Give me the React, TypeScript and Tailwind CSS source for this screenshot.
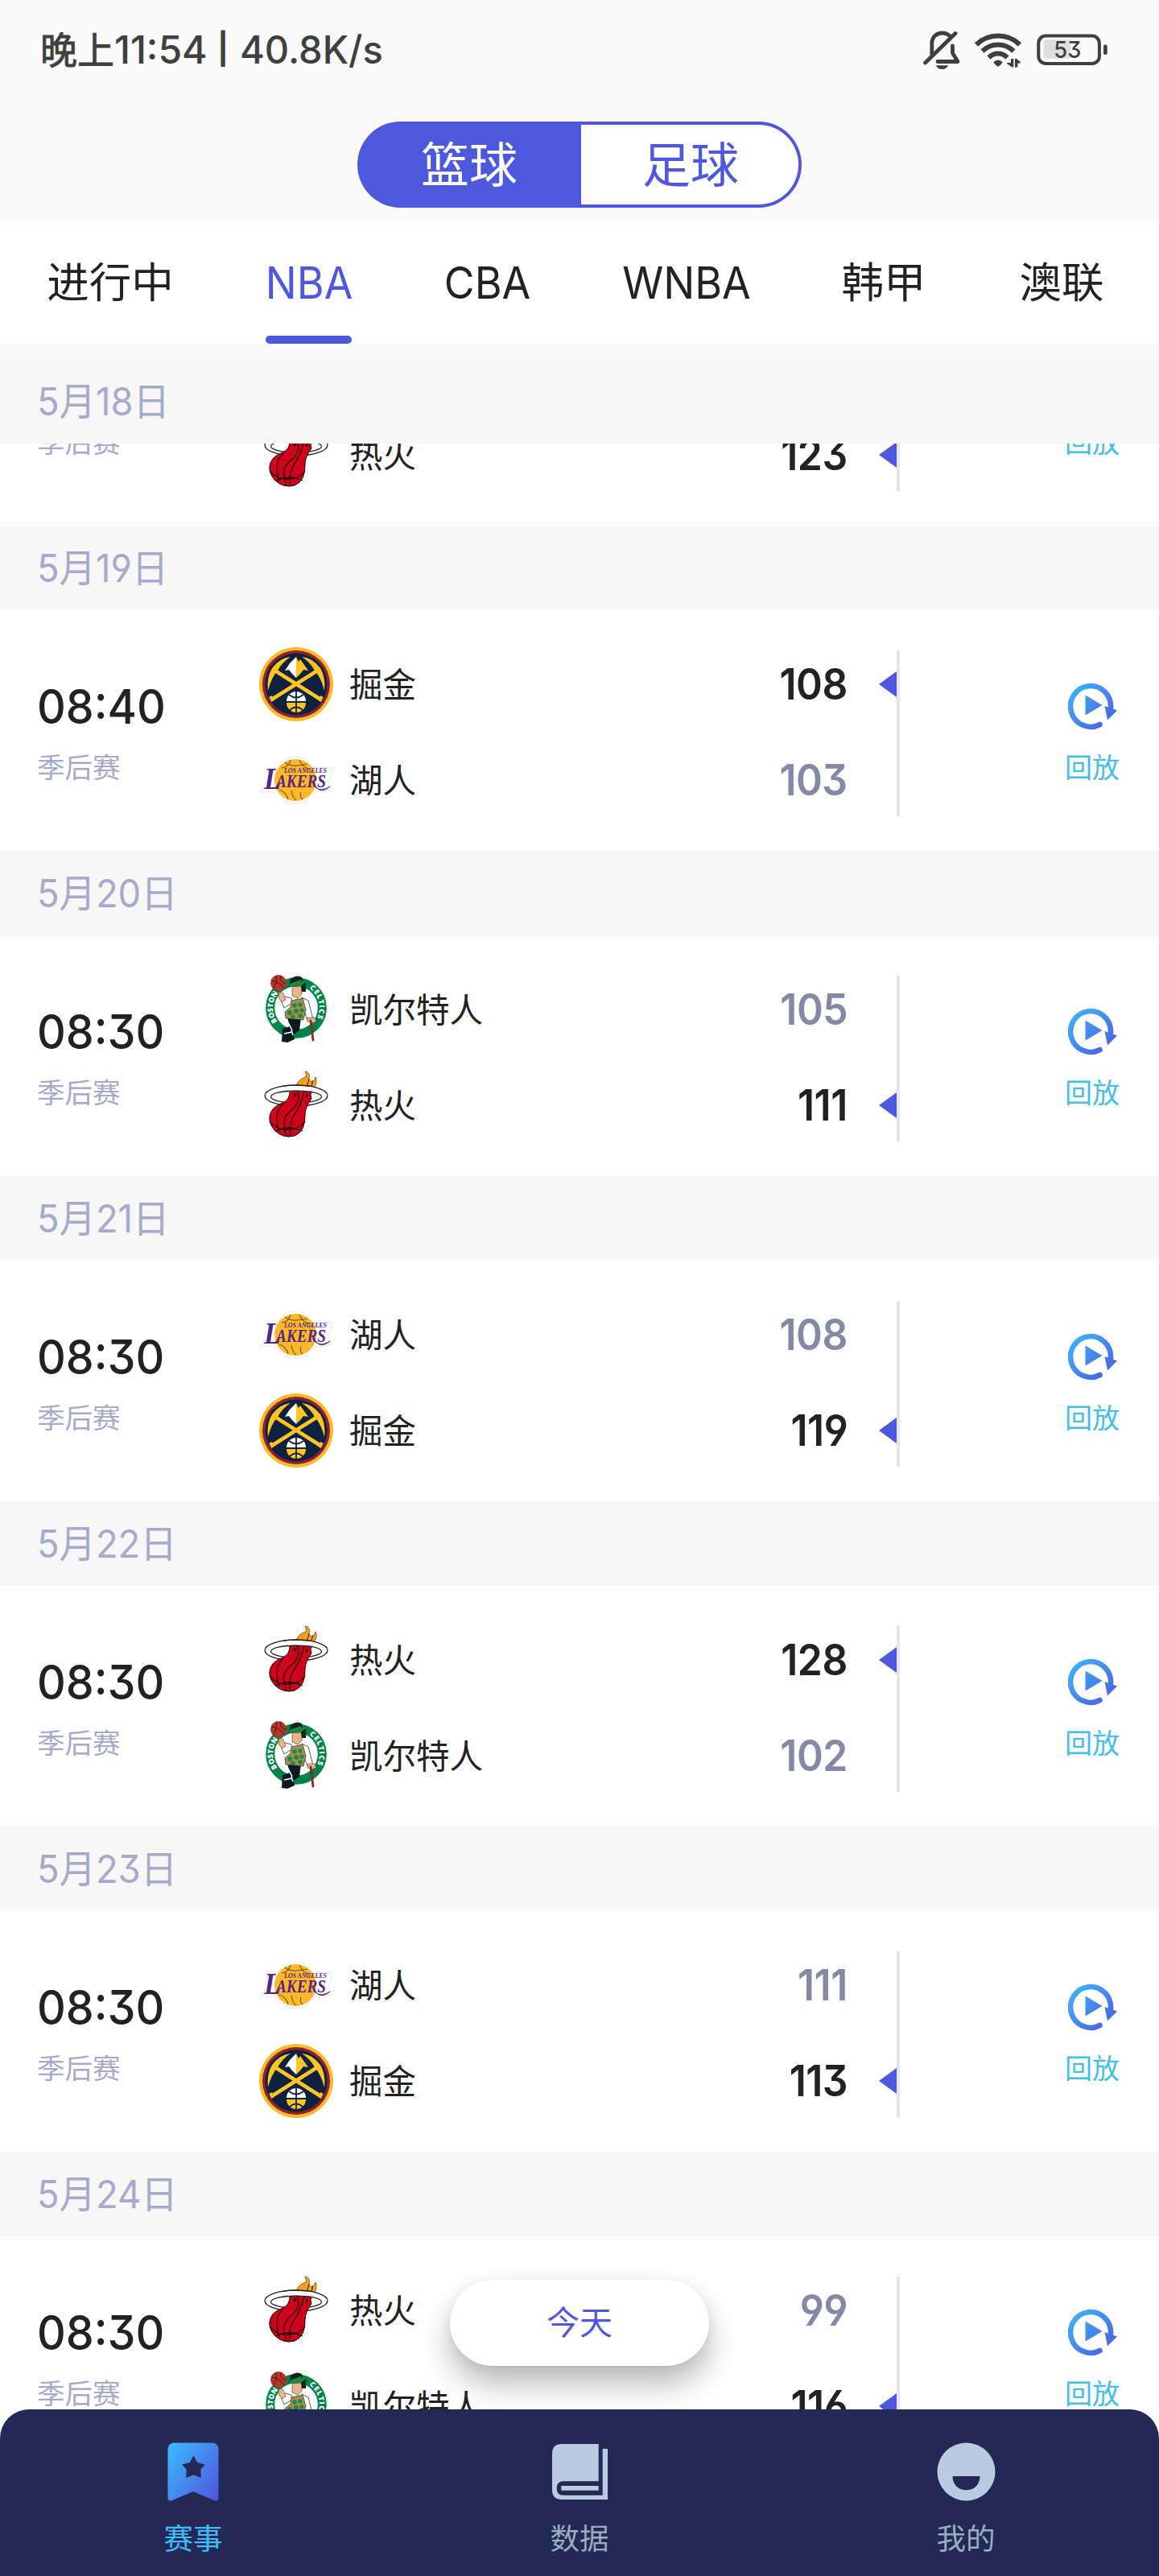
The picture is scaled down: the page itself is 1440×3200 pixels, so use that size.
import React from "react";

type Team = "nuggets" | "lakers" | "celtics" | "heat";
const NAMES: Record<Team, string> = { nuggets: "掘金", lakers: "湖人", celtics: "凯尔特人", heat: "热火" };

type Game = { time: string; a: Team; sa: number; b: Team; sb: number };
const LIST: { date: string; game: Game }[] = [
  { date: "5月19日", game: { time: "08:40", a: "nuggets", sa: 108, b: "lakers", sb: 103 } },
  { date: "5月20日", game: { time: "08:30", a: "celtics", sa: 105, b: "heat", sb: 111 } },
  { date: "5月21日", game: { time: "08:30", a: "lakers", sa: 108, b: "nuggets", sb: 119 } },
  { date: "5月22日", game: { time: "08:30", a: "heat", sa: 128, b: "celtics", sb: 102 } },
  { date: "5月23日", game: { time: "08:30", a: "lakers", sa: 111, b: "nuggets", sb: 113 } },
  { date: "5月24日", game: { time: "08:30", a: "heat", sa: 99, b: "celtics", sb: 116 } },
];

function Nuggets() {
  return (
    <svg width="92" height="92" viewBox="0 0 92 92">
      <circle cx="46" cy="46" r="46" fill="#fdb927" />
      <circle cx="46" cy="46" r="42" fill="#8b2131" />
      <circle cx="46" cy="46" r="38.5" fill="#0e2240" />
      <g stroke="#fec524" strokeWidth="4.6" strokeLinecap="butt">
        <path d="M17 64 L74 28" />
        <path d="M75 64 L18 28" />
      </g>
      <path d="M14 61l3 6M78 61l-3 6" stroke="#fec524" strokeWidth="4" />
      <path d="M39 12 Q26 13 16 26 Q9 38 11 54 Q15 38 23 29 Q29 18 39 12Z" fill="#fec524" />
      <path d="M53 12 Q66 13 76 26 Q83 38 81 54 Q77 38 69 29 Q63 18 53 12Z" fill="#fec524" />
      <path d="M46 12 L38 20 L32 29 L37 28 L40 32 L46 38Z" fill="#fff" />
      <path d="M46 12 L49 18 L51 15 L61 29 L55 28 L52 32 L46 38Z" fill="#fec524" />
      <path d="M34 67 A12 12 0 0 1 58 67Z" fill="#fff" />
      <path d="M34 69 A12 12 0 0 0 58 69Z" fill="#fec524" />
      <path d="M46 54v28M37 59Q46 66 55 59M37 79Q46 70 55 79" stroke="#0e2240" strokeWidth="1.8" fill="none" />
    </svg>
  );
}

function Lakers() {
  return (
    <svg width="92" height="92" viewBox="0 0 92 92">
      <path d="M4 57 L22 31 L30 22 Q46 12 60 22 L66 30 L91 31 L86 50 L90 56 L82 61 L69 60 Q60 75 45 75 Q28 74 23 61 L1 61Z" fill="#fff" stroke="#e9e9ec" strokeWidth="1" />
      <circle cx="45" cy="46" r="26" fill="#fdb927" />
      <path d="M32 24Q40 31 60 26M39 21Q36 31 28 31M50 21Q54 31 64 33M25 58Q34 61 36 70M40 59Q42 69 46 71M52 61Q50 67 54 70" stroke="#7d5a1c" strokeWidth="1.2" fill="none" />
      <text x="31" y="37" fontFamily="Liberation Serif, serif" fontSize="7.5" fontWeight="700" fontStyle="italic" fill="#552583" textLength="53" lengthAdjust="spacingAndGlyphs">LOS ANGELES</text>
      <text x="6" y="57" fontFamily="Liberation Serif, serif" fontSize="37" fontWeight="700" fontStyle="italic" fill="#552583" textLength="21" lengthAdjust="spacingAndGlyphs">L</text>
      <text x="21" y="54.5" fontFamily="Liberation Serif, serif" fontSize="23" fontWeight="700" fontStyle="italic" fill="#552583" textLength="62" lengthAdjust="spacingAndGlyphs">AKERS</text>
      <path d="M70 55 Q77 61 88 54 Q78 63 70 55Z" fill="#552583" stroke="#552583" strokeWidth=".8" />
    </svg>
  );
}

function Celtics() {
  return (
    <svg width="92" height="92" viewBox="0 0 92 92">
      <circle cx="46" cy="44" r="39" fill="#fff" stroke="#ececec" strokeWidth="1" />
      <circle cx="46" cy="44" r="32.3" fill="#fff" stroke="#008348" strokeWidth="11" />
      <path id="ringLeft" d="M22.5 61 A29 29 0 0 1 24.5 24.6" fill="none" />
      <path id="ringRight" d="M62.2 20 A29 29 0 0 1 71.6 57.6" fill="none" />
      <text fill="#fff" fontFamily="Open Sans, sans-serif" fontWeight="800" fontSize="9">
        <textPath href="#ringLeft" textLength="38">BOSTON</textPath>
      </text>
      <text fill="#fff" fontFamily="Open Sans, sans-serif" fontWeight="800" fontSize="9">
        <textPath href="#ringRight" textLength="41">CELTICS</textPath>
      </text>
      <path d="M35 56 L52 56 L50 72 L43 77 L44 83 L35 87 L28 86 L29 70 L38 67Z" fill="#0b1a22" />
      <path d="M36 62l5 10M31 76l10-2M40 72l2 6" stroke="#fff" strokeWidth="1.6" />
      <path d="M26 32 L31 44 L41 38 L40 32 L32 30Z M53 31 L61 35 L67 58 L60 59 L56 48Z" fill="#fff" stroke="#333" strokeWidth=".8" />
      <path d="M40 35 L54 32 L58 46 L55 59 L33 57 L32 49 L39 43Z" fill="#a48d52" stroke="#26351f" strokeWidth=".7" />
      <g fill="#1b8a3f"><circle cx="44" cy="41" r="2.8" /><circle cx="51" cy="40" r="2.6" /><circle cx="38" cy="50" r="3" /><circle cx="46" cy="48" r="3" /><circle cx="53" cy="47" r="2.6" /><circle cx="42" cy="55" r="2.6" /><circle cx="51" cy="54" r="2.8" /></g>
      <path d="M41 17 L53 17 L53 27 L48 32 L41 29Z" fill="#e8b48a" stroke="#4d3a2a" strokeWidth=".6" />
      <path d="M39 8 Q46 2 53 6 L54 12 L58 13 L58 24 L53 24 L52 17 L37 18Z" fill="#14231c" />
      <path d="M38 14 L52 9 L53 12 L61 9 L52 17 L38 18Z" fill="#1b8a3f" />
      <path d="M25 24 L30 26 L33 34 L28 37 L24 31Z M60 56 L69 56 L71 61 L66 63 L60 61Z" fill="#e8b48a" stroke="#5a4030" strokeWidth=".6" />
      <path d="M64 60 L67 84" stroke="#8c2b25" strokeWidth="2.8" strokeLinecap="round" />
      <circle cx="24" cy="13" r="10" fill="#b5352c" />
      <path d="M15 10Q25 11 31 20M21 4Q23 13 17 20M27 4Q25 11 33 14" stroke="#4a1512" strokeWidth="1" fill="none" />
    </svg>
  );
}

function Heat() {
  return (
    <svg width="92" height="92" viewBox="0 0 92 92">
      <path d="M46 24 Q47 14 58 11 Q59 7 57 4 Q64 5 62 13 Q63 18 66 17 Q70 14 70 11 Q73 17 68 25 L55 32Z" fill="#f9a01b" stroke="#6b4a1a" strokeWidth=".8" />
      <path d="M57 25 Q61 20 62 13M63 25 Q67 20 66 15" stroke="#33200c" strokeWidth="1.1" fill="none" />
      <path d="M7 34a39 13 0 1 0 78 0a39 13 0 1 0 -78 0M14.5 35.5a31.5 7.5 0 1 1 63 0a31.5 7.5 0 1 1 -63 0" fill="#fff" fillRule="evenodd" stroke="#222" strokeWidth="1.3" />
      <path d="M39 27 L65 27 Q63 33 65 38 Q58 46 57 57 Q58 78 44 84 Q30 88 19 77 Q10 66 14 56 Q17 48 27 44 Q39 40 38 27Z" fill="#d0021b" stroke="#1a0508" strokeWidth="1" />
      <path d="M47 28 Q54 42 37 55 Q26 66 34 84M56 28 Q53 42 46 54 Q36 68 38 84M30 44 Q17 56 25 79M13 66 Q24 78 37 76 Q50 76 57 66M20 78 Q38 70 54 78" stroke="#2a0508" strokeWidth="1.3" fill="none" />
      <path d="M60 31 Q62 36 57 36Z M42 31l5 1-3 4Z" fill="#1a0508" />
      <path d="M35 21.5 L66 22.5 L65 29 Q50 27 36 28Z" fill="#fff" />
      <path d="M30 22 Q46 20 66 22.7M32 28.6 Q46 27.3 64 29" stroke="#222" strokeWidth="1.2" fill="none" />
    </svg>
  );
}

const LOGOS: Record<Team, () => React.JSX.Element> = { nuggets: Nuggets, lakers: Lakers, celtics: Celtics, heat: Heat };

function TeamRow({ team, score, win }: { team: Team; score: number; win: boolean }) {
  const Logo = LOGOS[team];
  return (
    <div className="flex h-[92px] items-center">
      <div className="size-[92px] shrink-0"><Logo /></div>
      <span className="mt-px ml-5 text-[41.5px] leading-[48px] whitespace-nowrap text-[#222]">{NAMES[team]}</span>
      <span className={`ml-auto origin-right scale-x-[0.94] text-[53px] leading-[54px] font-semibold tracking-[-0.5px] ${win ? "text-[#222]" : "text-[#838aa6]"}`}>
        {score}
      </span>
      <div className="ml-[39px] flex w-[22px] shrink-0">
        {win && (
          <svg width="22" height="32" viewBox="0 0 22 32"><path d="M22 0V32L0 16Z" fill="#4e58de" /></svg>
        )}
      </div>
    </div>
  );
}

function Replay() {
  return (
    <svg width="62" height="60" viewBox="0 0 62 60">
      <defs>
        <linearGradient id="replayFill" gradientUnits="userSpaceOnUse" x1="6" y1="6" x2="52" y2="54">
          <stop offset="0" stopColor="#3fb2f8" /><stop offset="1" stopColor="#4b60e4" />
        </linearGradient>
      </defs>
      <path d="M39.5 53 A25 25.4 0 1 1 53 32" fill="none" stroke="url(#replayFill)" strokeWidth="6.6" strokeLinecap="round" />
      <path d="M21.5 16.5V41.5L42.5 29Z" fill="url(#replayFill)" />
      <path d="M45.5 30L61 35.5L49 47.5Z" fill="url(#replayFill)" />
    </svg>
  );
}

function GameRow({ game }: { game: Game }) {
  return (
    <div className="flex h-[299px] shrink-0 bg-white">
      <div className="flex w-[322px] flex-col pt-[90px] pl-[46px]">
        <span className="w-[164px] origin-left scale-x-[0.94] text-[59px] leading-[60px] font-medium text-[#222]">{game.time}</span>
        <span className="mt-[26px] text-[34.5px] leading-[40px] text-[#a5abcb]">季后赛</span>
      </div>
      <div className="flex w-[792px] flex-col gap-[27px] pt-[46px]">
        <TeamRow team={game.a} score={game.sa} win={game.sa > game.sb} />
        <TeamRow team={game.b} score={game.sb} win={game.sb > game.sa} />
      </div>
      <div className="mt-[50px] h-[206px] w-1 bg-[#e4e4ea]" />
      <div className="mr-[48px] ml-auto flex w-[69px] flex-col items-start pt-[89px]">
        <div className="pl-[4px]"><Replay /></div>
        <span className="mt-[27px] text-[34px] leading-[40px] whitespace-nowrap text-[#43bfe8]">回放</span>
      </div>
    </div>
  );
}

function DateBar({ text }: { text: string }) {
  return (
    <div className="flex h-[105px] shrink-0 items-center bg-[#f7f7f7] pl-[46px]">
      <span className="origin-left scale-x-[0.955] text-[47.5px] leading-[56px] text-[#a5abcb]">{text}</span>
    </div>
  );
}

const INK = "#3f3f3f";

function StatusIcons() {
  return (
    <svg width="230" height="50" viewBox="0 0 230 50">
      <g fill="none" stroke={INK} strokeWidth="4.8" strokeLinecap="round" strokeLinejoin="round">
        <path d="M10.8 31V17C11 8.5 17 4 23.5 4Q29.5 4 33.5 8" />
        <path d="M2.6 41L40 4.5" />
        <path d="M36.5 20V29L43 39.5H18" />
      </g>
      <path d="M15.7 44.3H31.3Q29 49 23.5 49Q18 49 15.7 44.3Z" fill={INK} />
      <g fill="none" stroke={INK} strokeWidth="6">
        <path d="M66 18.5Q77 7.6 93 7.6T120 18.5" />
        <path d="M73.5 26.5Q82 18.6 93 18.6T112.5 26.5" />
        <path d="M81.500 34.500Q86.5 29.6 93 29.6T104.5 34.500" />
      </g>
      <path d="M87.5 40Q93 35 98.5 40Q98 42.5 93 46Q88 42.5 87.5 40Z" fill={INK} />
      <path d="M109 36H112.3V46.5H110.5L104 42V41H109Z M114 36H116L120.8 40V41.5H117.5V46.5H114Z" fill={INK} />
      <rect x="143.3" y="7.6" width="75.6" height="34.3" rx="9" fill="none" stroke={INK} strokeWidth="4" />
      <path d="M153 12.3H183V35.7H153Q149.7 35.7 149.7 32V16Q149.7 12.3 153 12.3Z" fill="#dfdfdf" />
      <rect x="224" y="18.6" width="4.8" height="12.4" rx="2.2" fill={INK} />
      <text x="179.3" y="35" textAnchor="middle" fontSize="29" fontWeight="500" fill={INK} textLength="34" lengthAdjust="spacingAndGlyphs">53</text>
    </svg>
  );
}

function NavItem({ label, active, children }: { label: string; active?: boolean; children: React.ReactNode }) {
  return (
    <div className="flex flex-1 flex-col items-center pt-[41px]">
      <div className="flex h-[73px] items-center">{children}</div>
      <span className={`mt-[23px] text-[36.5px] leading-[48px] ${active ? "text-[#3dbcfa]" : "text-[#9babc0]"}`}>{label}</span>
    </div>
  );
}

export default function App() {
  return (
    <div className="relative flex h-[3200px] w-[1440px] flex-col overflow-hidden bg-[#fafafa] font-['Inter','Noto_Sans_CJK_SC',sans-serif] [font-feature-settings:'cv03','cv04','cv09']">
      <header className="flex h-[274px] shrink-0 flex-col">
        <div className="flex h-[124px] items-center pl-[50px]">
          <div className="flex items-center text-[48px] leading-[60px] font-medium whitespace-nowrap text-[#3f3f3f]">
            <span className="text-[46px] font-normal [-webkit-text-stroke:0.9px_#3f3f3f]">晚上</span>
            <span className="w-[114px]">11:54</span>
            <span className="w-[42px] pb-1 text-center text-[38px] font-bold">|</span>
            <span className="origin-left scale-x-[0.98]">40.8K/s</span>
          </div>
          <div className="ml-auto flex items-center pr-[63px]"><StatusIcons /></div>
        </div>
        <div className="mx-auto mt-[27px] flex h-[107px] w-[552px] text-[60px] leading-none">
          <div className="flex w-[278px] items-center justify-center rounded-l-full bg-[#4e58de] text-white">篮球</div>
          <div className="flex flex-1 items-center justify-center rounded-r-full border-4 border-l-0 border-[#4e58de] bg-white pl-[2px] text-[#4e58de]">足球</div>
        </div>
      </header>

      <nav className="flex h-[153px] shrink-0 gap-[114px] bg-white pl-[58px] text-[52.5px] leading-[155px] whitespace-nowrap text-[#222]">
        <div className="flex w-[158px] justify-center">进行中</div>
        <div className="flex w-[107px] flex-col items-center text-[#4e58de]">
          <span className="h-[143px] scale-x-[0.95] pl-[2px] text-[54.5px]">NBA</span>
          <span className="h-[10px] w-full rounded-[5px] bg-[#4e58de]" />
        </div>
        <div className="flex w-[110px] justify-center text-[54.5px]"><span className="scale-x-[0.95]">CBA</span></div>
        <div className="flex w-[156px] justify-center text-[54.5px]"><span className="scale-x-[0.95]">WNBA</span></div>
        <div className="flex w-[106px] justify-center">韩甲</div>
        <div className="flex w-[108px] justify-center">澳联</div>
      </nav>

      <main className="mt-[19px] flex flex-col">
        <DateBar text="5月18日" />
        <div className="flex h-[102px] flex-col justify-end overflow-hidden bg-white">
          <GameRow game={{ time: "08:30", a: "celtics", sa: 116, b: "heat", sb: 123 }} />
        </div>
        {LIST.map((d) => (
          <section key={d.date}><DateBar text={d.date} /><GameRow game={d.game} /></section>
        ))}
      </main>

      <button className="absolute bottom-[261px] left-[559px] flex h-[107px] w-[322px] items-center justify-center rounded-full bg-white text-[41px] leading-none text-[#4e58de] shadow-[0_22px_38px_rgba(0,0,0,0.28),0_2px_14px_rgba(0,0,0,0.05)]">
        今天
      </button>

      <footer className="absolute inset-x-0 bottom-0 flex h-[207px] rounded-t-[36px] bg-[#222955]">
        <NavItem label="赛事" active>
          <svg width="64" height="73" viewBox="0 0 64 73">
            <defs>
              <linearGradient id="bookmarkFill" x1="0" y1="0.1" x2="1" y2="0.9">
                <stop offset="0" stopColor="#3db8fc" /><stop offset="1" stopColor="#4e58de" />
              </linearGradient>
            </defs>
            <path d="M9 .5H55Q63.5 .5 63.5 9V68Q63.5 74 58 72L32 61L6 72Q.5 74 .5 68V9Q.5 .5 9 .5Z" fill="url(#bookmarkFill)" />
            <path d="M32.5 16.5L37.2 25L47 27.5L41.3 33.500L41.8 44L32.5 40.5L23.2 44L23.7 33.5L18 27.5L27.8 25Z" fill="#222955" />
          </svg>
        </NavItem>
        <NavItem label="数据">
          <svg width="69" height="69" viewBox="0 0 69 69" fill="#bacae1">
            <path d="M12 0H57.7V46.3H14Q5.7 46.3 5.7 55Q5.7 63.7 14 63.7H62.7V6H69V69H12Q0 69 0 57V12Q0 0 12 0Z" />
            <path d="M11.3 52H57.7V57.7H11.3Z" />
          </svg>
        </NavItem>
        <NavItem label="我的">
          <svg width="73" height="73" viewBox="0 0 73 73">
            <circle cx="36.5" cy="36.5" r="36" fill="#bacae1" />
            <path d="M19.5 42H53.5C53.5 53 46 59.3 36.5 59.3S19.5 53 19.5 42Z" fill="#222955" />
          </svg>
        </NavItem>
      </footer>
    </div>
  );
}
